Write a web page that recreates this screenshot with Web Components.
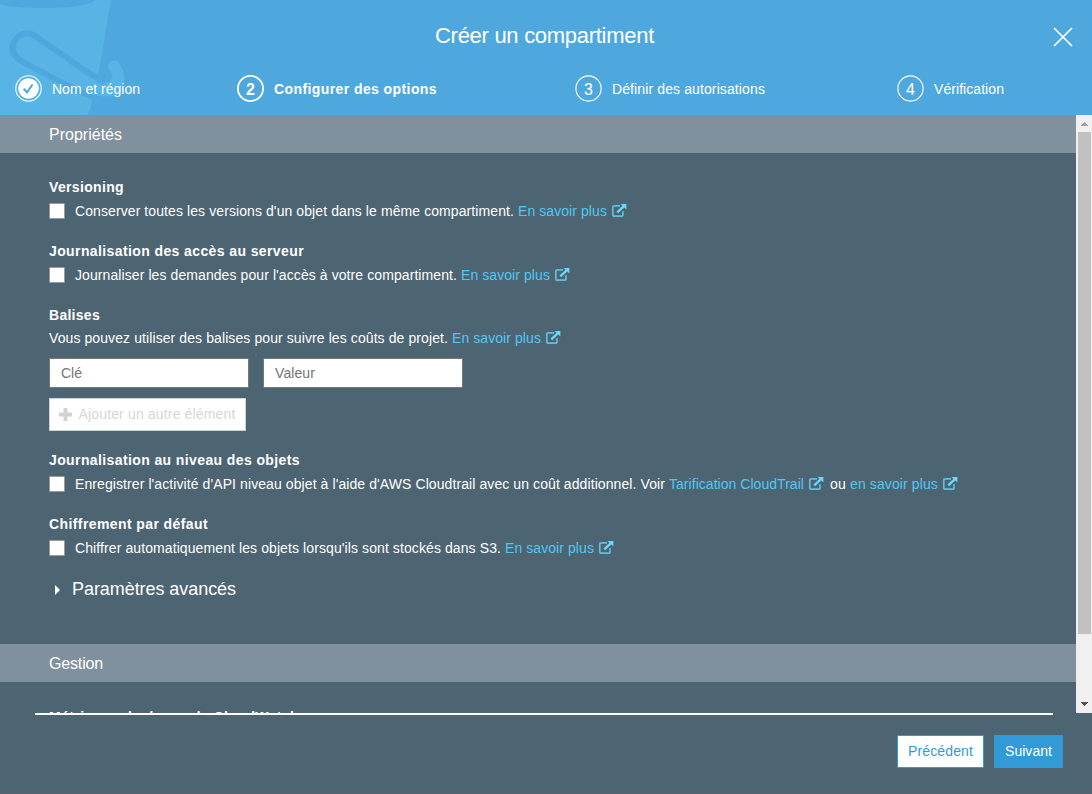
<!DOCTYPE html>
<html lang="fr">
<head>
<meta charset="utf-8">
<title>Créer un compartiment</title>
<style>
html,body{margin:0;height:100%;overflow:hidden}
body{font:14px/18px "Liberation Sans",Arial,sans-serif;color:#fff;background:#4d6472}
</style>
</head>
<body>
<bucket-wizard></bucket-wizard>
<script>
const define = (name, html, setup) => customElements.define(name, class extends HTMLElement {
  connectedCallback() {
    if (this.shadowRoot) return;
    const root = this.attachShadow({mode: 'open'});
    const t = document.createElement('template');
    t.innerHTML = typeof html === 'function' ? html(this) : html;
    root.append(t.content.cloneNode(true));
    if (setup) setup(this, root);
  }
});

/* A single line of text whose tracking is adjusted to the width in its "w" attribute. */
define('track-text', `<style>:host{display:inline-block;white-space:pre;flex:none}span{display:inline-block}</style><span><slot></slot></span>`, (el, root) => {
  const s = root.querySelector('span'), w = +el.getAttribute('w'), n = el.textContent.length;
  s.style.letterSpacing = (w - s.getBoundingClientRect().width) / n + 'px';
  el.style.width = w + 'px';
});

define('step-item', el => {
  const n = el.getAttribute('n'), st = el.getAttribute('state');
  const mark = st === 'done'
    ? `<circle cx="13.5" cy="13.5" r="12.7" fill="none" stroke="#fff" stroke-width="1.1"/><circle cx="13.5" cy="13.5" r="10.3" fill="#fff"/><path d="M8.7 13.800l3.300 3.500 5.600-7.800" fill="none" stroke="#4fa9de" stroke-width="2.1"/>`
    : `<circle cx="13.5" cy="13.5" r="12.6" fill="none" stroke="#fff" stroke-width="${st === 'on' ? 1.8 : 1.1}"/>`;
  return `<style>:host{display:flex;align-items:center;height:27px;flex:none}
  .m{display:grid;width:27px;height:27px;margin-right:10px;flex:none}
  .m>*{grid-area:1/1}.m b{place-self:center;font:${st === 'on' ? 'bold' : 'normal'} 16px/29px "Liberation Sans",sans-serif;height:27px}
  ::slotted(*){font-weight:${st === 'on' ? 'bold' : 'normal'};position:relative;top:.5px}</style>
  <div class="m"><svg width="27" height="27">${mark}</svg>${st === 'done' ? '' : `<b>${n}</b>`}</div><slot></slot>`;
});

define('wizard-header', `<style>
:host{display:block;height:115px;background:#4fa8dd;position:relative;overflow:hidden;flex:none}
.art{position:absolute;left:0;top:0}
.title{display:flex;justify-content:center;font-size:22px;line-height:26px;padding-top:23px;height:26px;margin-right:3px;position:relative}
.close{position:absolute;left:1053px;top:27px}
.steps{display:grid;grid-template-columns:222px 338px 322px auto;padding:26px 0 0 15px;position:relative}
</style>
<svg class="art" width="150" height="115"><path d="M0 0H111L98 77L92 101Q91 110 87 115H0Z" fill="#57b4e4"/><path d="M0 0H95Q88 8 42 8Q10 8 0 4Z" fill="#4fa8dd"/>
<path d="M101 79C92 76 86 71 80 67L38 38C28 30 18 34 14 42C11 49 13 55 20 60Q28 65 44 73Q68 87 93 97" fill="none" stroke="#4fa8dd" stroke-width="6"/>
<path d="M90 81Q99 84 104 83Q112 82 112.500 76Q112 72 109 69Q107 64 111 61.500Q116 59 119 62.500Q125 73 124.500 80Q123 92 115 95.500Q106 98.500 91 94Z" fill="#57b4e4"/></svg>
<div class="title"><track-text w="219">Créer un compartiment</track-text></div>
<svg class="close" width="20" height="20"><path d="M1 1L19 19M19 1L1 19" stroke="#fff" stroke-width="1.7"/></svg>
<div class="steps">
<step-item state="done"><track-text w="88">Nom et région</track-text></step-item>
<step-item n="2" state="on"><track-text w="163">Configurer des options</track-text></step-item>
<step-item n="3"><track-text w="153">Définir des autorisations</track-text></step-item>
<step-item n="4"><track-text w="70">Vérification</track-text></step-item>
</div>`);

define('section-bar', `<style>:host{box-sizing:border-box;display:flex;align-items:center;height:38px;background:#80919d;padding:2px 0 0 49px;font-size:16px;flex:none}</style><slot></slot>`);

define('ext-link', el => `<style>:host{display:inline-flex;align-items:center;color:#50c8f4;height:22px;margin-left:4px}svg{margin:0 0 2px 4px;flex:none}</style>
<track-text w="${el.getAttribute('w')}">${el.getAttribute('text')}</track-text>
<svg width="16" height="15" viewBox="0 0 16 15"><path d="M9 2.800H3.4Q1.8 2.800 1.8 4.3V11.4Q1.8 13.2 3.4 13.2H10.4Q12 13.2 12 11.4V8.3" fill="none" stroke="#5fbfdd" stroke-width="1.7"/><path d="M6.3 9.4L13.2 2.8" stroke="#6cd7fa" stroke-width="2.3"/><path d="M9.6 1H15.4V6.6Z" fill="#6cd7fa"/></svg>`);

define('check-row', `<style>:host{display:flex;align-items:center;height:22px}i{box-sizing:border-box;width:16px;height:16px;background:#fff;border:1px solid #9a9a9a;border-radius:1px;margin-right:10px;flex:none}</style><i></i><slot></slot>`);

define('option-group', `<style>:host{display:block;margin-bottom:20px}.h{height:18px;margin-bottom:4px;font-weight:bold}</style><div class="h"><slot name="h"></slot></div><slot></slot>`);

define('tag-field', `<style>:host{box-sizing:border-box;display:flex;align-items:center;width:200px;height:30px;background:#fff;border:1px solid #777;padding-left:11px;color:#757575}</style><slot></slot>`);

define('ui-button', `<style>:host{box-sizing:border-box;display:flex;align-items:center;justify-content:center;height:33px;background:#fff;border:1px solid #329ad6;color:#329ad6;padding-bottom:1px}
:host([kind=primary]){background:#329ad6;color:#fff}
:host([kind=off]){border-color:#ced3d6;color:#d5d7d8}</style><slot></slot>`);

define('side-scroll', `<style>:host{display:flex;flex-direction:column;align-items:center;width:16px;background:#f0f0f0;flex:none}
svg{display:block;flex:none}.t{width:13px;height:502px;background:#c1c1c1;margin-left:1px}.s{flex:1}</style>
<svg width="16" height="17" shape-rendering="crispEdges"><path d="M5 11h7v-1h-1v-1h-1v-1h-1v-1h-1v1h-1v1h-1v1h-1z" fill="#a3a3a3"/></svg><div class="t"></div><div class="s"></div>
<svg width="16" height="17" shape-rendering="crispEdges"><path d="M5 6h7v1h-1v1h-1v1h-1v1h-1v-1h-1v-1h-1v-1h-1z" fill="#505050"/></svg>`);

define('options-panel', `<style>
:host{display:block;height:598px;flex:1;overflow:hidden}
.body{padding:25px 0 0 49px;height:466px}
.last{padding-top:26px}
.line{display:flex;align-items:center;height:22px}
.tags{display:flex;gap:14px;margin:9px 0 10px}
.intro{margin-top:-1px}
.add{width:197px}.add svg{margin-right:7px}.add track-text{margin-right:1px}
.adv{display:flex;align-items:center;height:20px;font-size:18px;padding-left:6px}
.adv svg{margin:1px 12px 0 0}
</style>
<section-bar><track-text w="73">Propriétés</track-text></section-bar>
<div class="body">
<option-group><track-text slot="h" w="75">Versioning</track-text>
<check-row><track-text w="439">Conserver toutes les versions d'un objet dans le même compartiment.</track-text><ext-link w="89" text="En savoir plus"></ext-link></check-row></option-group>
<option-group><track-text slot="h" w="255">Journalisation des accès au serveur</track-text>
<check-row><track-text w="382">Journaliser les demandes pour l'accès à votre compartiment.</track-text><ext-link w="89" text="En savoir plus"></ext-link></check-row></option-group>
<option-group><track-text slot="h" w="51">Balises</track-text>
<div class="line intro"><track-text w="399">Vous pouvez utiliser des balises pour suivre les coûts de projet.</track-text><ext-link w="89" text="En savoir plus"></ext-link></div>
<div class="tags"><tag-field><track-text w="21">Clé</track-text></tag-field><tag-field><track-text w="40">Valeur</track-text></tag-field></div>
<ui-button kind="off" class="add"><svg width="13" height="13"><path d="M4.5 0h4v4.5H13v4H8.500V13h-4V8.500H0v-4h4.500z" fill="#d0d3d4"/></svg><track-text w="157">Ajouter un autre élément</track-text></ui-button></option-group>
<option-group><track-text slot="h" w="251">Journalisation au niveau des objets</track-text>
<check-row><track-text w="590">Enregistrer l'activité d'API niveau objet à l'aide d'AWS Cloudtrail avec un coût additionnel. Voir</track-text><ext-link w="135" text="Tarification CloudTrail"></ext-link><track-text w="16" style="margin-left:6px">ou</track-text><ext-link w="88" text="en savoir plus"></ext-link></check-row></option-group>
<option-group><track-text slot="h" w="159">Chiffrement par défaut</track-text>
<check-row><track-text w="426">Chiffrer automatiquement les objets lorsqu'ils sont stockés dans S3.</track-text><ext-link w="89" text="En savoir plus"></ext-link></check-row></option-group>
<div class="adv"><svg width="5" height="10"><path d="M0 0L5 5L0 10Z" fill="#fff"/></svg><track-text w="164">Paramètres avancés</track-text></div>
</div>
<section-bar><track-text w="54">Gestion</track-text></section-bar>
<div class="body last"><option-group><track-text slot="h" w="250">Métriques de demande CloudWatch</track-text></option-group></div>`);

define('wizard-footer', `<style>:host{display:block;flex:1;border-bottom:1px solid #5a6069}
.rule{height:2px;background:#fff;margin:0 39px 20px 35px}
.b{display:flex;gap:10px;justify-content:flex-end;padding-right:29px}</style>
<div class="rule"></div><div class="b"><ui-button style="width:87px"><track-text w="65">Précédent</track-text></ui-button><ui-button kind="primary" style="width:69px"><track-text w="47">Suivant</track-text></ui-button></div>`);

define('bucket-wizard', `<style>:host{display:flex;flex-direction:column;width:1092px;height:794px;background:#4d6472}.main{display:flex;height:598px;flex:none}</style>
<wizard-header></wizard-header><div class="main"><options-panel></options-panel><side-scroll></side-scroll></div><wizard-footer></wizard-footer>`);
</script>
</body>
</html>
